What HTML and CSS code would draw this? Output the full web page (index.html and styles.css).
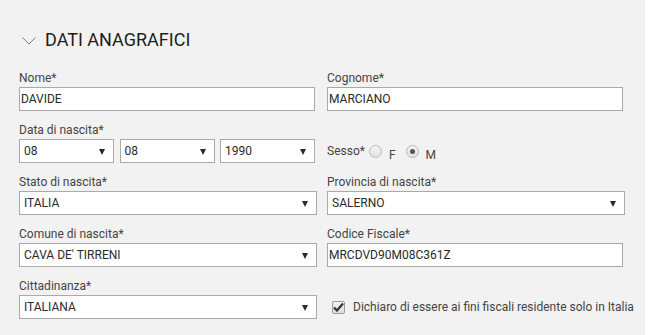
FILE: index.html
```html
<!doctype html>
<html>
<head>
<meta charset="utf-8">
<title>Dati anagrafici</title>
<link rel="stylesheet" href="styles.css">
</head>
<body>
<div class="page">
	<div class="head">
		<svg class="chev" width="14" height="8" viewBox="0 0 14 8"><polyline points="0.5,0.5 7,7 13.5,0.5" fill="none" stroke="#7a7a7a" stroke-width="1"/></svg>
		<h2>DATI ANAGRAFICI</h2>
	</div>
	<div class="form">
		<div class="field">
			<div class="lbl">Nome*</div>
			<div class="box">DAVIDE</div>
		</div>
		<div class="field">
			<div class="lbl">Cognome*</div>
			<div class="box">MARCIANO</div>
		</div>

		<div class="field">
			<div class="lbl">Data di nascita*</div>
			<div class="dates">
				<div class="sel">08<span class="caret"></span></div>
				<div class="sel">08<span class="caret"></span></div>
				<div class="sel">1990<span class="caret"></span></div>
			</div>
		</div>
		<div class="field noLbl">
			<div class="row sesso">
				<span class="txt">Sesso*</span>
				<span class="radio"></span><span class="opt">F</span>
				<span class="radio on"></span><span class="opt">M</span>
			</div>
		</div>

		<div class="field">
			<div class="lbl">Stato di nascita*</div>
			<div class="sel wide">ITALIA<span class="caret"></span></div>
		</div>
		<div class="field">
			<div class="lbl">Provincia di nascita*</div>
			<div class="sel wide">SALERNO<span class="caret"></span></div>
		</div>

		<div class="field">
			<div class="lbl">Comune di nascita*</div>
			<div class="sel wide">CAVA DE' TIRRENI<span class="caret"></span></div>
		</div>
		<div class="field">
			<div class="lbl">Codice Fiscale*</div>
			<div class="box">MRCDVD90M08C361Z</div>
		</div>

		<div class="field">
			<div class="lbl">Cittadinanza*</div>
			<div class="sel wide">ITALIANA<span class="caret"></span></div>
		</div>
		<div class="field noLbl">
			<div class="row check">
				<span class="cb"><svg width="11" height="10" viewBox="0 0 11 10"><path d="M1 5.5 L4 8.5 L10 1.5" fill="none" stroke="#333" stroke-width="2.2"/></svg></span>
				<span class="txt">Dichiaro di essere ai fini fiscali residente solo in Italia</span>
			</div>
		</div>
	</div>
</div>
</body>
</html>
```

FILE: styles.css
```css
*{ margin:0; padding:0; box-sizing:border-box;}
body{ background:#fff; font-family:Roboto, "Liberation Sans", Arial, sans-serif; color:#444;}

.page{ width:645px; min-height:335px; background:#f2f2f2; padding:29px 0 0 19px;}

.head{ display:flex; align-items:center; height:22px; margin-left:3px;}
.head .chev{ margin-right:9px; margin-top:1px;}
.head h2{ font-size:18px; line-height:22px; font-weight:400; color:#1e1e1e;}

.form{ display:grid; grid-template-columns:296px 296px; column-gap:12px; row-gap:11px; margin-top:19px;}
.field.noLbl{ padding-top:17px;}
.lbl{ font-size:12px; line-height:16px; margin-bottom:1px; color:#444;}

.box,.sel{ height:24px; border:1px solid #a9a9a9; background:#fff; font-size:12px; line-height:22px; color:#2a2a2a; white-space:nowrap;}
.box{ padding-left:1px;}
.sel{ position:relative; padding-left:4px; border-color:#aaa;}
.sel.wide{ width:calc(100% + 2px);}
.caret{ position:absolute; right:8px; top:9px; border-left:3px solid transparent; border-right:3px solid transparent; border-top:6px solid #2a2a2a;}

.dates{ display:flex; justify-content:space-between;}
.dates .sel{ width:95px;}

.row{ display:flex; align-items:center; height:24px; font-size:12px; line-height:16px; white-space:nowrap;}
.sesso .txt{ margin-right:4px;}
.radio{ width:13px; height:13px; border-radius:50%; border:1px solid #b9b9b9; background:linear-gradient(#f4f4f4,#e2e2e2); display:flex; align-items:center; justify-content:center;}
.radio.on::after{ content:""; width:5px; height:5px; border-radius:50%; background:#555;}
.opt{ margin:8px 10px 0 7px;}

.check{ padding-left:5px;}
.cb{ flex:none; width:13px; height:13px; border:1px solid #9c9c9c; border-radius:2px; background:linear-gradient(#f2f2f2,#dcdcdc); display:flex; align-items:center; justify-content:center; margin-right:8px;}
.check .txt{ font-size:12px;}
```
